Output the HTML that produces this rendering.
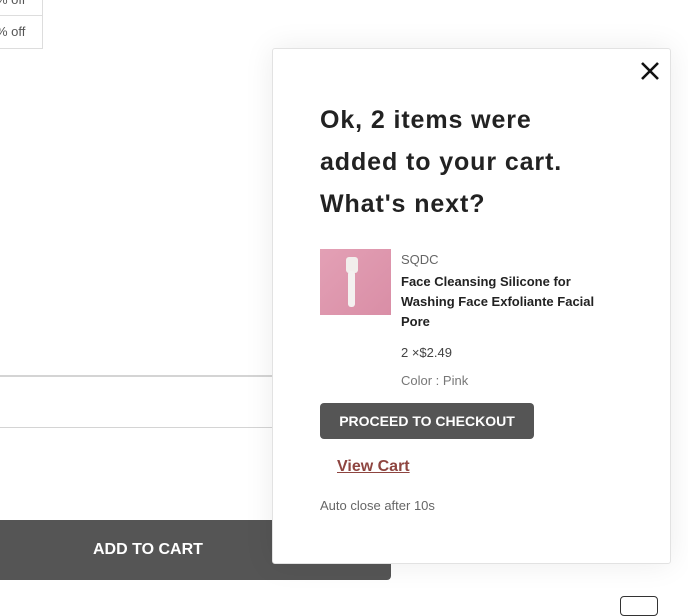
<!DOCTYPE html>
<html><head><style>
*{margin:0;padding:0;box-sizing:border-box}
body{width:688px;height:602px;background:#fff;position:relative;overflow:hidden;font-family:"Liberation Sans",sans-serif;color:#222}
.abs{position:absolute}
</style></head><body>
<div class="abs" style="left:-10px;top:-20px;width:53px;height:36px;border:1px solid #ddd"></div>
<div class="abs" style="left:-10px;top:15px;width:53px;height:34px;border:1px solid #ddd;border-top:none"></div>
<div class="abs" style="left:-4px;top:-8px;font-size:13px;color:#555">% off</div>
<div class="abs" style="left:-4px;top:24px;font-size:13px;color:#555">% off</div>
<div class="abs" style="left:0;top:375px;width:290px;height:2px;background:#d4d4d4"></div>
<div class="abs" style="left:0;top:427px;width:290px;height:1px;background:#d4d4d4"></div>
<div class="abs" style="left:0;top:520px;width:391px;height:60px;background:#555;border-radius:0 0 4px 0;color:#fff;font-weight:bold;font-size:16px;line-height:60px;padding-left:93px">ADD TO CART</div>
<div class="abs" style="left:620px;top:596px;width:38px;height:20px;border:1.5px solid #333;border-radius:4px"></div>
<div class="abs" style="left:272px;top:48px;width:399px;height:516px;background:#fff;border:1px solid #e2e2e2;border-radius:3px;box-shadow:0 0 30px rgba(0,0,0,0.08)">
  <svg class="abs" style="left:367px;top:12px" width="20" height="20" viewBox="0 0 20 20"><path d="M2 2L18 18M18 2L2 18" stroke="#111" stroke-width="2.6"/></svg>
  <div class="abs" style="left:47px;top:50px;font-size:25px;font-weight:bold;line-height:42px;color:#222;letter-spacing:0.9px">Ok, 2 items were<br>added to your cart.<br>What's next?</div>
  <div class="abs" style="left:47px;top:200px;width:71px;height:66px;background:linear-gradient(135deg,#e3a0b5,#d98ea6)">
    <div class="abs" style="left:26px;top:8px;width:12px;height:16px;background:#f2eeec;border-radius:3px"></div>
    <div class="abs" style="left:28px;top:22px;width:7px;height:36px;background:#f4f1f0;border-radius:3px"></div>
  </div>
  <div class="abs" style="left:128px;top:203px;font-size:13px;color:#666">SQDC</div>
  <div class="abs" style="left:128px;top:223px;width:210px;font-size:13px;line-height:20px;font-weight:bold;color:#222">Face Cleansing Silicone for Washing Face Exfoliante Facial Pore</div>
  <div class="abs" style="left:128px;top:296px;font-size:13px;color:#444">2 ×$2.49</div>
  <div class="abs" style="left:128px;top:324px;font-size:13px;color:#777">Color : Pink</div>
  <div class="abs" style="left:47px;top:354px;width:214px;height:36px;background:#555;border-radius:4px;color:#fff;font-weight:bold;font-size:14px;line-height:36px;text-align:center">PROCEED TO CHECKOUT</div>
  <div class="abs" style="left:64px;top:409px;font-size:16px;font-weight:bold;color:#8e4540;text-decoration:underline">View Cart</div>
  <div class="abs" style="left:47px;top:449px;font-size:13px;color:#666">Auto close after 10s</div>
</div>
</body></html>
